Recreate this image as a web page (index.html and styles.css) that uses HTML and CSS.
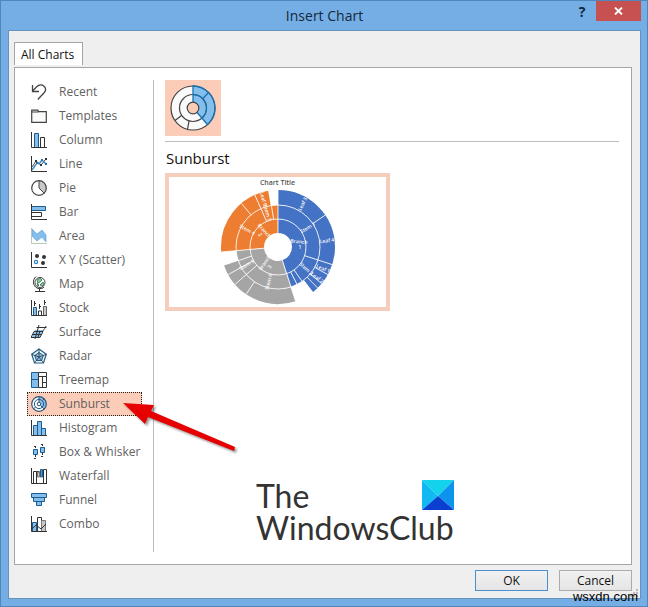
FILE: index.html
```html
<!DOCTYPE html>
<html lang="en">
<head>
    <meta charset="UTF-8">
    <meta name="viewport" content="width=device-width, initial-scale=1.0">
    <title>Insert Chart</title>
    <link rel="stylesheet" href="styles.css">
</head>
<body>
    <div class="window">
        <header class="titlebar">
            <h1>Insert Chart</h1>
            <div class="controls">
                <button class="help" type="button">?</button>
                <button class="close" type="button" aria-label="Close">
                    <svg width="9" height="8" viewBox="0 0 9 8"><path d="M1 .5l7 7M8 .5l-7 7" stroke="#fff" stroke-width="1.8"/></svg>
                </button>
            </div>
        </header>

        <main class="client">
            <button class="tab" type="button">All Charts</button>

            <div class="panel">
                <nav class="types">
                    <button type="button"><svg viewBox="0 0 16 16"><path d="M1.500 1v6.500h6.500M1.500 7L6 2.500C8 .5 11 .5 13 2.200c2 1.900 2 4.300.3 6.300L6.800 15.500" fill="none" stroke="#444" stroke-width="1.300"/></svg>Recent</button>
                    <button type="button"><svg viewBox="0 0 16 16"><path d="M.7 14.300V2.200h6l1 1.500h7.600v10.600zM.7 4h7" fill="#fafafa" stroke="#444" stroke-width="1.200"/></svg>Templates</button>
                    <button type="button"><svg viewBox="0 0 16 16"><path d="M3.500 15V1.500h4V15" fill="#83beec" stroke="#1e5c8e"/><path d="M9.500 15V5.500h4V15M.5 0v15.500H16" fill="none" stroke="#333"/></svg>Column</button>
                    <button type="button"><svg viewBox="0 0 16 16"><path d="M.5 0v15.500H16" fill="none" stroke="#333"/><path d="M1 11l4-6 5 4 5-6" fill="none" stroke="#444"/><path d="M1 14l5-7 2 1 3-4 4 4" fill="none" stroke="#2e83c4" stroke-width="1.300"/><path d="M4 4h2v2H4zM9 8h2v2H9zM14 2h2v2h-2z" fill="#333"/><path d="M5 6h2v2H5zM10 3h2v2h-2zM14 7h2v2h-2z" fill="#2475b5"/></svg>Line</button>
                    <button type="button"><svg viewBox="0 0 16 16"><circle cx="8" cy="8" r="7.300" fill="#fff"/><path d="M8 .7V8l5.200 5.200A7.300 7.300 0 0 0 8 .7z" fill="#c8c8c8"/><path d="M8 .7V8l5.200 5.200" fill="none" stroke="#444"/><circle cx="8" cy="8" r="7.300" fill="none" stroke="#444" stroke-width="1.200"/></svg>Pie</button>
                    <button type="button"><svg viewBox="0 0 16 16"><path d="M1 2.500h13.500v4H1" fill="#83beec" stroke="#1e5c8e"/><path d="M1 8.500h9.500v4H1M.5 0v15.500H16" fill="none" stroke="#333"/></svg>Bar</button>
                    <button type="button"><svg viewBox="0 0 16 16"><path d="M1 1l5 5 5-4 4 5v7l-4-5-5 4-5-5z" fill="#83beec" stroke="#5a9bcf" stroke-width=".6"/><path d="M.5 0v15.500H16" fill="none" stroke="#b5cbb8"/></svg>Area</button>
                    <button type="button"><svg viewBox="0 0 16 16"><path d="M.5 0v15.500H16" fill="none" stroke="#333"/><g fill="#333"><circle cx="6" cy="4" r="2"/><circle cx="13" cy="5" r="2"/><circle cx="12" cy="11" r="2"/></g><circle cx="5" cy="10" r="1.600" fill="#fff" stroke="#2e83c4" stroke-width="1.200"/></svg>X Y (Scatter)</button>
                    <button type="button"><svg viewBox="0 0 16 16"><circle cx="9" cy="6.500" r="5" fill="#fff" stroke="#444"/><path d="M6 4l3-2 2 2-2 2-2 1zM9 9l3-3 1 2-2 2zM6 7l2 2-1 1z" fill="#8ccba2" stroke="#2f7148" stroke-width=".8"/><path d="M5 .5C1 4 2 10 6 12c3 1.300 6 .5 7-1M8.500 12.500v3M4 15.500h10" fill="none" stroke="#333"/></svg>Map</button>
                    <button type="button"><svg viewBox="0 0 16 16"><path d="M2.500 15V7.500h3V15" fill="#83beec" stroke="#1e5c8e"/><path d="M7.500 15v-4h3v4" fill="#fff" stroke="#333"/><path d="M12.500 15V6.500h3V15" fill="#c8c8c8" stroke="#666"/><path d="M.5 0v15.500H16M3.500 1v5M8.500 4v5M13.500 0v5M3.500 3.500H5M8.500 6.500H10M13.500 2.500H15" fill="none" stroke="#333"/></svg>Stock</button>
                    <button type="button"><svg viewBox="0 0 16 16"><path d="M1 13l3-7h8l-3 7z" fill="#83beec"/><path d="M0 13.500h9l3-6H3zM1.500 10.500h9M4 15l4-14M7 13l2-6M5.500 3.500h10M12 7c1-3 2-1 3-5" fill="none" stroke="#333"/></svg>Surface</button>
                    <button type="button"><svg viewBox="0 0 16 16"><path d="M8 1l7.300 5.300L12.500 15h-9L.7 6.300z" fill="#e8f4fb" stroke="#225f86" stroke-width="1.200"/><path d="M8 4.500l4.300 3-1.700 5H5.400l-1.700-5z" fill="#83beec" stroke="#205f87"/><path d="M8 1v8l7.300-2.700M8 9l4.500 6M8 9l-4.500 6M8 9L.7 6.300" fill="none" stroke="#333" stroke-width=".8"/></svg>Radar</button>
                    <button type="button"><svg viewBox="0 0 16 16"><path d="M.5.500h7v7h-7zM.5 7.500h7v8h-7z" fill="#83beec" stroke="#1e5c8e"/><path d="M7.500.500h8v4h-8zM7.500 4.500h4v11h-4zM11.500 4.500h4v6h-4zM11.500 10.500h4v5h-4z" fill="#fff" stroke="#333"/></svg>Treemap</button>
                    <button type="button" class="selected"><svg viewBox="0 0 16 16"><circle cx="8" cy="8" r="7.300" fill="#fff"/><path d="M8 .7V6a2 2 0 0 1 1.500 3.500l3.700 3.700A7.300 7.300 0 0 0 8 .7z" fill="#83beec"/><g fill="none" stroke="#2c5578"><circle cx="8" cy="8" r="7.300" stroke-width="1.200"/><circle cx="8" cy="8" r="4.600"/><circle cx="8" cy="8" r="1.800"/><path d="M8 .7V6M9.500 9.500l3.700 3.700M11.500 4.500l2-2M2.500 13l2-2"/></g></svg>Sunburst</button>
                    <button type="button"><svg viewBox="0 0 16 16"><path d="M2.500 15V5.500h4V15M6.500 15V1.500h4V15M10.500 15V8.500h4V15" fill="#83beec" stroke="#1e5c8e"/><path d="M.5 0v15.500H16" fill="none" stroke="#333"/></svg>Histogram</button>
                    <button type="button"><svg viewBox="0 0 16 16"><path d="M4.500 2v12M11.500 0v12M3 2.500h3M3 14.500h3M10 .5h3M10 12.500h3" stroke="#333" stroke-dasharray="2 1"/><path d="M2.500 5.500h4v5h-4zM9.500 3.500h4v5h-4z" fill="#83beec" stroke="#1e5c8e"/></svg>Box &amp; Whisker</button>
                    <button type="button"><svg viewBox="0 0 16 16"><path d="M2.500 15V3.500h3V15M12.500 15V1.500h3V15M5.500 3.500h3M.5 0v15.500H16" fill="none" stroke="#333"/><path d="M6.500 4v5h2V4z" fill="#c8c8c8" stroke="#777"/><path d="M9.500 9V1.500h2V9z" fill="#4b9ad6" stroke="#1e5c8e"/></svg>Waterfall</button>
                    <button type="button"><svg viewBox="0 0 16 16"><path d="M.5 1.500h15v4H.5zM2.500 5.500h11v4h-11zM5.500 9.500h5v4h-5z" fill="#83beec" stroke="#1e5c8e"/></svg>Funnel</button>
                    <button type="button"><svg viewBox="0 0 16 16"><path d="M1.500 15V6.500h4V15" fill="#83beec" stroke="#1e5c8e"/><path d="M6.500 15V1.500h4V15" fill="#fff" stroke="#333"/><path d="M10.500 15V4.500h4V15" fill="#c8c8c8" stroke="#777"/><path d="M.5 0v15.500H16M1 13l4-4 5 4 5-5" fill="none" stroke="#333"/></svg>Combo</button>
                </nav>

                <section class="detail">
                    <button class="subtype" type="button" aria-label="Sunburst">
                        <svg width="46" height="46" viewBox="-23 -23 46 46">
                            <circle r="22" fill="#fafafa"/>
                            <path d="M0-22A22 22 0 0 1 14.500 16.500L4 4.500A6 6 0 0 0 0-6z" fill="#83beec"/>
                            <g fill="none" stroke="#444" stroke-width="1.200">
                                <circle r="22"/><circle r="13.500"/>
                                <path d="M-4 13l-1.500 8.300M-11.500 7.500l-6.500 5"/>
                            </g>
                            <path d="M0-6v-16A22 22 0 0 1 14.500 16.500L4 4.500M0-13.500A13.500 13.500 0 0 1 9 10M10-9.500l5.500-6" fill="none" stroke="#1673b1" stroke-width="1.300"/>
                            <circle r="5.800" fill="#fbcdb8" stroke="#444" stroke-width="1.200"/>
                        </svg>
                    </button>
                    <h2>Sunburst</h2>
                    <div class="preview">
                        <div class="chart-title">Chart Title</div>
                        <svg width="116" height="116" viewBox="-58 -58 116 116">
                            <!-- each ring is drawn in degrees, clockwise from the top -->
                            <g fill="none" stroke-width="14" transform="rotate(-90)">
                                <g stroke="#4472c4">
                                    <circle r="21" pathLength="360" stroke-dasharray="162 360"/>
                                    <circle r="35" pathLength="360" stroke-dasharray="162 360"/>
                                    <circle r="49.500" stroke-width="15" pathLength="360" stroke-dasharray="142 360"/>
                                </g>
                                <g stroke="#a5a5a5">
                                    <circle r="21" pathLength="360" stroke-dasharray="103 360" transform="rotate(162)"/>
                                    <circle r="35" pathLength="360" stroke-dasharray="103 360" transform="rotate(162)"/>
                                    <circle r="49.500" stroke-width="15" pathLength="360" stroke-dasharray="89 360" transform="rotate(162)"/>
                                </g>
                                <g stroke="#ed7d31">
                                    <circle r="21" pathLength="360" stroke-dasharray="95 360" transform="rotate(265)"/>
                                    <circle r="35" pathLength="360" stroke-dasharray="95 360" transform="rotate(265)"/>
                                    <circle r="49.500" stroke-width="15" pathLength="360" stroke-dasharray="85 360" transform="rotate(265)"/>
                                </g>
                            </g>
                            <g fill="none" stroke="#fff" stroke-width=".8">
                                <circle r="28"/>
                                <circle r="42"/>
                                <path d="M0-14v-43"/>
                                <path d="M0-14v-43" transform="rotate(162)"/>
                                <path d="M0-14v-43" transform="rotate(265)"/>
                                <path d="M0-28v-29" transform="rotate(108)"/>
                                <path d="M0-28v-14" transform="rotate(145)"/>
                                <path d="M0-28v-14" transform="rotate(153)"/>
                                <path d="M0-42v-15" transform="rotate(56)"/>
                                <path d="M0-42v-15" transform="rotate(119)"/>
                                <path d="M0-42v-15" transform="rotate(130)"/>
                                <path d="M0-42v-15" transform="rotate(136)"/>
                                <path d="M0-42v-15" transform="rotate(214)"/>
                                <path d="M0-28v-29" transform="rotate(229)"/>
                                <path d="M0-28v-29" transform="rotate(241)"/>
                                <path d="M0-28v-14" transform="rotate(251)"/>
                                <path d="M0-42v-15" transform="rotate(320)"/>
                                <path d="M0-28v-29" transform="rotate(336)"/>
                                <path d="M0-28v-14" transform="rotate(351)"/>
                            </g>
                            <g class="labels">
                                <text transform="translate(21 -5) rotate(5)">Branch</text>
                                <text transform="translate(22 1)">1</text>
                                <text transform="translate(30 -19) rotate(-30)">Stem 1</text>
                                <text transform="translate(28 22) rotate(42)">Stem 2</text>
                                <text transform="translate(25 -43) rotate(-63)">Leaf 5</text>
                                <text transform="translate(49 -6) rotate(-7)">Leaf 4</text>
                                <text transform="translate(45 22) rotate(22)">Leaf 1</text>
                                <text transform="translate(39 31) rotate(36)">Leaf 2</text>
                                <text transform="translate(-13 16) rotate(-55)">Branch</text>
                                <text transform="translate(-8 20) rotate(-55)">3</text>
                                <text transform="translate(-9 35) rotate(-75)">Stem 6</text>
                                <text transform="translate(-31 18) rotate(-30)">Stem 5</text>
                                <text transform="translate(-14 -16) rotate(48)">Branch</text>
                                <text transform="translate(-18 -12) rotate(48)">2</text>
                                <text transform="translate(-31 -17) rotate(28)">Stem 4</text>
                                <text transform="translate(-11 -34) rotate(72)">Stem 3</text>
                                <text transform="translate(-15 -48) rotate(74)">Leaf 9</text>
                            </g>
                        </svg>
                    </div>

                    <div class="brand">
                        <span>The</span>
                        <svg width="32" height="30" viewBox="0 0 32 30">
                            <path d="M0 0h32L16 16z" fill="#13d3ec"/>
                            <path d="M0 0l16 16L0 30z" fill="#10b9f2"/>
                            <path d="M32 0v30L16 16z" fill="#0c93ee"/>
                            <path d="M0 30l16-14 16 14z" fill="#0a3fd0"/>
                        </svg>
                        <span class="brand-name">WindowsClub</span>
                    </div>
                </section>
            </div>

            <footer class="actions">
                <button class="ok" type="button">OK</button>
                <button type="button">Cancel</button>
            </footer>
        </main>

        <svg class="arrow" width="120" height="60" viewBox="0 0 120 60">
            <path d="M1 6l31 2-3 6 84 36-1 4-86-34-3 7z" fill="#e60000"/>
        </svg>
        <svg class="grip" width="8" height="8" viewBox="0 0 8 8"><path d="M6 0h2v2H6zM3 3h2v2H3zM6 3h2v2H6zM0 6h2v2H0zM3 6h2v2H3zM6 6h2v2H6z" fill="#b9b9b9"/></svg>
        <span class="site">wsxdn.com</span>
    </div>
</body>
</html>
```

FILE: styles.css
```css
* {
    box-sizing: border-box;
}
body {
    margin: 0;
    font-family: "Open Sans", "Noto Sans", sans-serif;
    font-size: 12px;
    color: #111;
}
button {
    font: inherit;
    color: inherit;
    padding: 0;
    border: none;
    background: none;
}
h1, h2 {
    margin: 0;
    font-weight: normal;
}
.window {
    position: relative;
    display: flex;
    flex-direction: column;
    min-height: 100vh;
    padding: 0 6px 7px 7px;
    background-color: #74aee5;
    border: 1px solid #4f87bc;
}
.titlebar {
    display: grid;
    grid-template-columns: 1fr auto 1fr;
    height: 29px;
}
.titlebar h1 {
    grid-column: 2;
    font-size: 14px;
    line-height: 29px;
    color: #16283c;
}
.controls {
    display: flex;
    justify-content: flex-end;
    align-items: flex-start;
    gap: 9px;
}
.help {
    width: 10px;
    font-size: 14px;
    font-weight: bold;
    line-height: 21px;
    color: #12283e;
}
.close {
    display: flex;
    justify-content: center;
    align-items: center;
    width: 45px;
    height: 20px;
    background-color: #c75050;
}
.client {
    flex: 1;
    display: flex;
    flex-direction: column;
    padding: 11px 8px 7px 5px;
    background-color: #efefef;
    border: 1px solid #6593bd;
}
.tab {
    align-self: flex-start;
    height: 23px;
    margin-bottom: 2px;
    padding: 0 8px 0 6px;
    background-color: #fff;
    border: 1px solid #a5a5a5;
    border-bottom: none;
}
.panel {
    flex: 1;
    display: flex;
    padding: 12px;
    background-color: #fff;
    border: 1px solid #a5a5a5;
}
.types {
    display: flex;
    flex-direction: column;
    padding-right: 11px;
    border-right: 1px solid #bdbdbd;
}
.types button {
    display: flex;
    align-items: center;
    gap: 12px;
    width: 115px;
    height: 24px;
    padding: 0 0 1px 3px;
    border: 1px solid transparent;
    color: #5f5f5f;
    white-space: nowrap;
}
.types svg {
    flex: none;
    width: 16px;
    height: 16px;
}
.types .selected {
    background-color: #fbcdb8;
    border: 1px dotted #222;
}
.detail {
    flex: 1;
    display: flex;
    flex-direction: column;
    align-items: flex-start;
    padding: 0 0 8px 11px;
}
.subtype {
    display: flex;
    justify-content: center;
    align-items: center;
    width: 56px;
    height: 56px;
    background-color: #fbcdb8;
}
.detail h2 {
    align-self: stretch;
    margin-top: 5px;
    padding: 6px 0 4px 1px;
    border-top: 1px solid #bdbdbd;
    font-size: 15px;
    line-height: 21px;
}
.preview {
    display: flex;
    flex-direction: column;
    align-items: center;
    width: 225px;
    height: 138px;
    border: 4px solid #f4cdbc;
}
.chart-title {
    height: 12px;
    font-size: 7px;
    font-weight: 600;
    line-height: 12px;
    color: #555;
}
.labels {
    font-size: 5px;
    font-weight: 600;
    fill: #fff;
    text-anchor: middle;
    dominant-baseline: middle;
}
.brand {
    display: grid;
    grid-template-columns: 1fr auto;
    width: 198px;
    margin: auto 0 0 91px;
    font-family: Lato, sans-serif;
    font-size: 32px;
    line-height: 32px;
    color: #333;
}
.brand-name {
    grid-column: 1 / 3;
}
.actions {
    display: flex;
    justify-content: flex-end;
    gap: 11px;
    padding-top: 5px;
}
.actions button {
    width: 73px;
    height: 21px;
    background: linear-gradient(#f1f1f1, #e5e5e5);
    border: 1px solid #acacac;
}
.actions .ok {
    border-color: #4a90cc;
}
.arrow {
    position: absolute;
    left: 121px;
    top: 396px;
    filter: drop-shadow(2px 2px 1px rgba(0, 0, 0, 0.4));
}
.grip {
    position: absolute;
    right: 9px;
    bottom: 9px;
}
.site {
    position: absolute;
    right: 9px;
    bottom: 1px;
    font-family: "Liberation Sans", Arial, sans-serif;
    font-size: 13px;
    line-height: 16px;
    color: #000;
}
```
